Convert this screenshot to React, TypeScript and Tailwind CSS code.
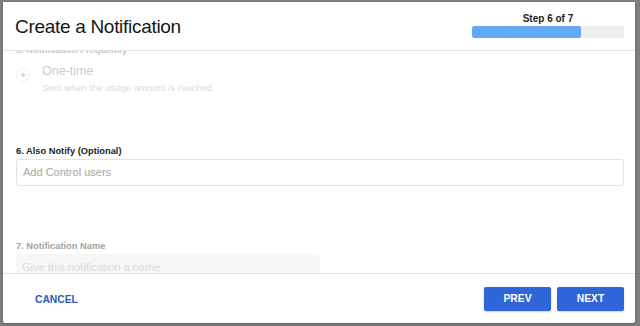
import React from "react";

export default function App() {
  const font = { fontFamily: '"Liberation Sans", Arial, Helvetica, sans-serif' };
  return (
    <div
      className="w-[640px] h-[326px] bg-[#7f7f7f] pt-[2px] pl-[3px] overflow-hidden"
      style={font}
    >
      <div className="w-[632px] h-[321px] bg-white flex flex-col rounded-[2px] shadow-[0_1px_3px_rgba(0,0,0,0.25)]">
        {/* Header */}
        <div className="h-[49px] shrink-0 flex items-center justify-between pl-[12px] pr-[11px] border-b border-[#e2e2e2] relative z-10 bg-white">
          <div className="text-[19px] tracking-[-0.3px] text-[#161616] leading-[22px] mt-[2px]">
            Create a Notification
          </div>
          <div className="flex flex-col items-center w-[152px] mb-[1px]">
            <div className="text-[10px] leading-[12px] font-bold text-[#1d1d1d]">Step 6 of 7</div>
            <div className="mt-[1px] w-[152px] h-[12px] rounded-[2px] bg-[#eceef2] overflow-hidden">
              <div className="w-[109px] h-full rounded-[2px] bg-[#64a9f5]" />
            </div>
          </div>
        </div>

        {/* Body */}
        <div className="flex-1 overflow-hidden pl-[13px] pr-[11px]">
          <div className="flex flex-col mt-[-7px]">
            <div className="h-[12px] leading-[12px] text-[9.3px] font-bold text-[#c4c4c4]">
              5. Notification Frequency
            </div>
            <div className="flex items-start mt-[8px]">
              <div className="w-[14px] h-[14px] mt-[4px] rounded-full border border-[#f0f0f0] flex items-center justify-center">
                <div className="w-[4px] h-[4px] rounded-full bg-[#dadada]" />
              </div>
              <div className="ml-[12px] flex flex-col">
                <div className="text-[12.5px] leading-[15px] text-[#cbcbcb]">One-time</div>
                <div className="text-[9.5px] leading-[12px] mt-[3px] text-[#dcdcdc]">
                  Sent when the usage amount is reached
                </div>
              </div>
            </div>

            <div className="mt-[51px] h-[12px] leading-[12px] text-[9.3px] font-bold text-[#222]">
              6. Also Notify (Optional)
            </div>
            <div className="mt-[2px] h-[27px] rounded-[3px] border border-[#e1e1e1] flex items-center pl-[6px] text-[11px] text-[#a6a6a6]">
              Add Control users
            </div>

            <div className="mt-[54px] h-[12px] leading-[12px] text-[9.3px] font-bold text-[#a3a3a3]">
              7. Notification Name
            </div>
            <div className="mt-[2px] w-[304px] h-[27px] rounded-[3px] bg-[#f6f6f6] flex items-center pl-[6px] text-[11px] text-[#dcdcdc]">
              Give this notification a name
            </div>
          </div>
        </div>

        {/* Footer */}
        <div className="h-[50px] shrink-0 border-t border-[#e2e2e2] flex items-center justify-between pl-[32px] pr-[11px]">
          <div className="text-[10.3px] font-bold text-[#2d5cb8] mt-[2px]">CANCEL</div>
          <div className="flex gap-[6px] mt-[1px]">
            <div className="w-[67px] h-[24px] rounded-[2px] bg-[#2e65d8] text-white text-[10.3px] font-bold flex items-center justify-center shadow-[0_1px_2px_rgba(0,0,0,0.2)]">
              PREV
            </div>
            <div className="w-[67px] h-[24px] rounded-[2px] bg-[#2e65d8] text-white text-[10.3px] font-bold flex items-center justify-center shadow-[0_1px_2px_rgba(0,0,0,0.2)]">
              NEXT
            </div>
          </div>
        </div>
      </div>
    </div>
  );
}
